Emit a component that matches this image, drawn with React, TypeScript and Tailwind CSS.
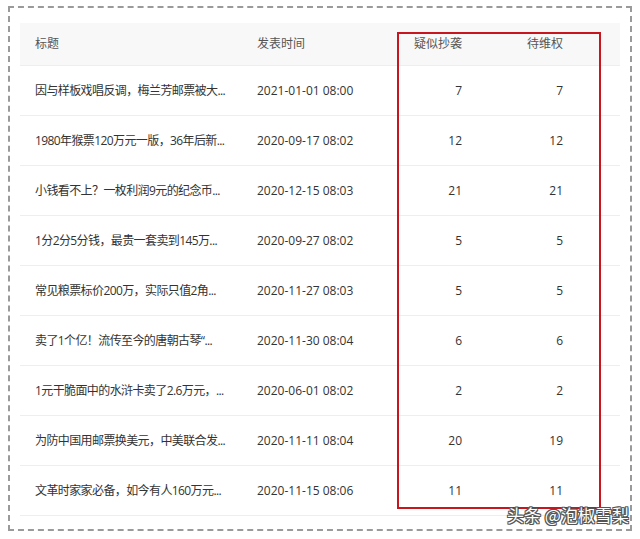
import React from "react";

const rows = [
  { title: "因与样板戏唱反调，梅兰芳邮票被大...", date: "2021-01-01 08:00", a: 7, b: 7 },
  { title: "1980年猴票120万元一版，36年后新...", date: "2020-09-17 08:02", a: 12, b: 12 },
  { title: "小钱看不上？一枚利润9元的纪念币...", date: "2020-12-15 08:03", a: 21, b: 21 },
  { title: "1分2分5分钱，最贵一套卖到145万...", date: "2020-09-27 08:02", a: 5, b: 5 },
  { title: "常见粮票标价200万，实际只值2角...", date: "2020-11-27 08:03", a: 5, b: 5 },
  { title: "卖了1个亿！流传至今的唐朝古琴“...", date: "2020-11-30 08:04", a: 6, b: 6 },
  { title: "1元干脆面中的水浒卡卖了2.6万元，...", date: "2020-06-01 08:02", a: 2, b: 2 },
  { title: "为防中国用邮票换美元，中美联合发...", date: "2020-11-11 08:04", a: 20, b: 19 },
  { title: "文革时家家必备，如今有人160万元...", date: "2020-11-15 08:06", a: 11, b: 11 },
];

export default function App() {
  return (
    <div
      className="relative w-[640px] h-[539px] bg-white overflow-hidden"
      style={{ fontFamily: "'Open Sans', 'Noto Sans CJK SC', sans-serif" }}
    >
      <div className="mt-[6px] ml-[8px] w-[624px] h-[525px] border-2 border-dashed border-[#9a9a9a] pt-[15px] px-[10px]">
        <div className="w-[600px] text-[12px] text-[#333]">
          <div className="flex items-center h-[43px] bg-[#f8f8f8] border-b border-[#eeeeee] text-[#555]">
            <div className="w-[222px] pl-[15px]">标题</div>
            <div className="w-[155px] pl-[15px]">发表时间</div>
            <div className="w-[80px] pr-[15px] text-right">疑似抄袭</div>
            <div className="w-[101px] pr-[15px] text-right">待维权</div>
            <div className="flex-1" />
          </div>
          {rows.map((r, i) => (
            <div key={i} className="flex items-center h-[50px] border-b border-[#eeeeee]">
              <div className="w-[222px] pl-[15px] whitespace-nowrap overflow-hidden tracking-[-0.6px]">{r.title}</div>
              <div className="w-[155px] pl-[15px] whitespace-nowrap">{r.date}</div>
              <div className="w-[80px] pr-[15px] text-right">{r.a}</div>
              <div className="w-[101px] pr-[15px] text-right">{r.b}</div>
              <div className="flex-1" />
            </div>
          ))}
        </div>
      </div>
      <div className="absolute left-[397px] top-[32px] w-[204px] h-[477px] border-2 border-[#c8161e]" />
      <div
        className="absolute left-[507px] top-[504px] text-[17px] leading-[22px] text-white whitespace-nowrap"
        style={{
          fontFamily: "'Noto Sans CJK SC', sans-serif",
          textShadow:
            "1px 0 0 #555, -1px 0 0 #555, 0 1px 0 #555, 0 -1px 0 #555, 1px 1px 0 #555, -1px -1px 0 #555, 1px -1px 0 #555, -1px 1px 0 #555",
        }}
      >
        头条 @泡椒雪梨
      </div>
    </div>
  );
}
